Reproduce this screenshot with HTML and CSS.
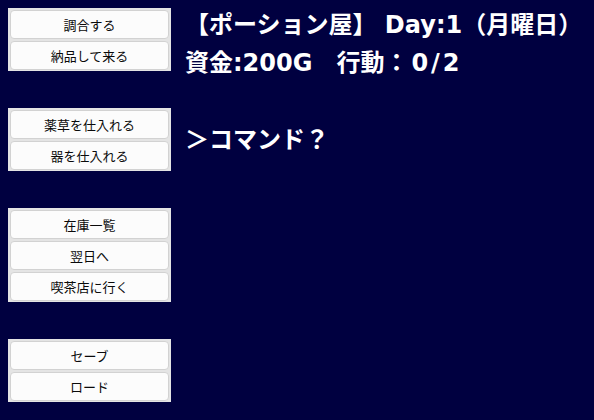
FILE: index.html
```html
<!DOCTYPE html>
<html lang="ja">
<head>
<meta charset="utf-8">
<title>ポーション屋</title>
<link rel="stylesheet" href="styles.css">
</head>
<body>
<div class="screen">
  <nav class="menu">
    <div class="group">
      <button class="cmd">調合する</button>
      <button class="cmd">納品して来る</button>
    </div>
    <div class="group">
      <button class="cmd">薬草を仕入れる</button>
      <button class="cmd">器を仕入れる</button>
    </div>
    <div class="group">
      <button class="cmd">在庫一覧</button>
      <button class="cmd">翌日へ</button>
      <button class="cmd">喫茶店に行く</button>
    </div>
    <div class="group">
      <button class="cmd">セーブ</button>
      <button class="cmd">ロード</button>
    </div>
  </nav>
  <main class="log">
    <div class="status">
      <div class="line">【ポーション屋】 Day:1（月曜日）</div>
      <div class="line">資金:200G　行動：<span class="count">0/2</span></div>
    </div>
    <div class="prompt">＞コマンド？</div>
  </main>
</div>
</body>
</html>
```

FILE: styles.css
```css
html, body {
  margin: 0;
  padding: 0;
  background: #000040;
}

.screen {
  display: flex;
  align-items: flex-start;
  width: 594px;
  height: 420px;
  overflow: hidden;
  font-family: "Noto Sans CJK JP", "Noto Sans", sans-serif;
}

.menu {
  display: flex;
  flex-direction: column;
  gap: 37px;
  padding: 8px 0 0 8px;
  width: 163px;
  flex: none;
}

.group {
  display: flex;
  flex-direction: column;
  gap: 2px;
  padding: 2px 2px 1px;
  background: #e4e4e4;
}

.cmd {
  height: 29px;
  margin: 0;
  padding: 0;
  border: 1px solid #d2d2d2;
  border-radius: 4px;
  background: #fcfcfc;
  color: #0a0a0a;
  font-family: "Noto Sans CJK JP", sans-serif;
  font-size: 13px;
  line-height: 27px;
  text-align: center;
}

.log {
  padding: 6px 0 0 14px;
  color: #ffffff;
  font-family: "DejaVu Sans", "Noto Sans CJK JP", sans-serif;
  font-weight: bold;
  font-size: 24px;
  white-space: nowrap;
}

.line {
  line-height: 38px;
}

/* action counter: slightly airier digits */
.count {
  margin-left: 3px;
  letter-spacing: 3px;
}

.prompt {
  margin-top: 39px;
  line-height: 38px;
}
```
